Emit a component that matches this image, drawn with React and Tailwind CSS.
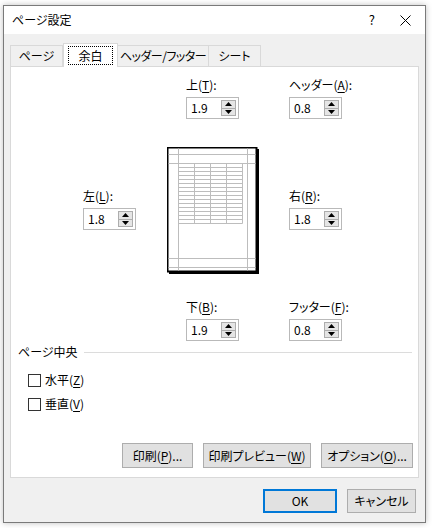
import React from 'react';

const font = "font-['Yu_Gothic_UI','Meiryo_UI','Noto_Sans_CJK_JP',sans-serif] [font-feature-settings:'palt']";

function Acc({ children }) {
  return <span className="underline underline-offset-2">{children}</span>;
}

function Spin() {
  return (
    <div className="absolute right-[2px] top-[2px] bottom-[2px] w-[15px] flex flex-col border border-[#adadad] bg-[#e5e5e5]">
      <div className="flex-1 flex items-center justify-center border-b border-[#adadad]">
        <svg width="7" height="4" viewBox="0 0 7 4"><path d="M0 4 L3.5 0 L7 4 Z" fill="#000" /></svg>
      </div>
      <div className="flex-1 flex items-center justify-center">
        <svg width="7" height="4" viewBox="0 0 7 4"><path d="M0 0 L3.5 4 L7 0 Z" fill="#000" /></svg>
      </div>
    </div>
  );
}

function Field({ label, acc, value }) {
  return (
    <div className="flex flex-col w-[53px]">
      <div className="h-[16px] leading-[16px] text-[12px] whitespace-nowrap">
        {label}(<Acc>{acc}</Acc>):
      </div>
      <div className="relative mt-[4px] h-[22px] w-[53px] border border-[#b9b9b9] bg-white">
        <span className="absolute left-[4px] top-[2px] text-[12px] leading-[16px]">{value}</span>
        <Spin />
      </div>
    </div>
  );
}

function PagePreview() {
  const rows = [];
  for (let i = 0; i <= 15; i++) rows.push(16 + i * 4);
  const cols = [11, 27, 43, 59, 75];
  return (
    <svg width="92" height="127" viewBox="0 0 92 127" className="block">
      <rect x="2" y="2" width="90" height="125" fill="#000" />
      <rect x="0.5" y="0.5" width="89" height="124" fill="#fff" stroke="#000" strokeWidth="2" />
      <g stroke="#bdbdbd" strokeWidth="1">
        <line x1="11.5" y1="1.5" x2="11.5" y2="123.5" />
        <line x1="80.5" y1="1.5" x2="80.5" y2="123.5" />
        <line x1="1.5" y1="7.5" x2="88.5" y2="7.5" />
        <line x1="1.5" y1="16.5" x2="88.5" y2="16.5" />
        <line x1="1.5" y1="111.5" x2="88.5" y2="111.5" />
        <line x1="1.5" y1="120.5" x2="88.5" y2="120.5" />
        {rows.map(y => <line key={'r' + y} x1="11.5" y1={y + 0.5} x2="75.5" y2={y + 0.5} />)}
        {cols.map(x => <line key={'c' + x} x1={x + 0.5} y1="16.5" x2={x + 0.5} y2="76.5" />)}
      </g>
    </svg>
  );
}

function Check({ label, acc }) {
  return (
    <div className="flex items-center h-[24px] pl-[17px]">
      <div className="w-[13px] h-[13px] border border-[#333] bg-white" />
      <span className="ml-[4px] text-[12px] leading-[16px]">{label}(<Acc>{acc}</Acc>)</span>
    </div>
  );
}

function Btn({ children, className = '' }) {
  return (
    <div className={`h-[25px] flex items-center justify-center whitespace-nowrap border border-[#adadad] bg-[#e1e1e1] text-[12px] ${className}`}>
      {children}
    </div>
  );
}

export default function App() {
  return (
    <div className={`w-[432px] h-[528px] overflow-hidden bg-white pt-[5px] pl-[3px] text-black ${font}`}>
      <div className="w-[423px] h-[518px] border border-[#7a7a7a] flex flex-col bg-[#f0f0f0] shadow-[0_0_6px_rgba(0,0,0,0.25)]">
        {/* title bar */}
        <div className="h-[28px] bg-white flex items-center pl-[8px] shrink-0">
          <span className="text-[12px]">ページ設定</span>
          <span className="ml-auto mr-[25px] text-[13px]">?</span>
          <svg width="11" height="11" viewBox="0 0 11 11" className="mr-[14px]">
            <path d="M0.5 0.5 L10.5 10.5 M10.5 0.5 L0.5 10.5" stroke="#000" strokeWidth="1" />
          </svg>
        </div>

        <div className="flex-1 flex flex-col pl-[6px] pr-[6px]">
          {/* tabs */}
          <div className="mt-[9px] h-[23px] flex items-end text-[12px] whitespace-nowrap relative z-10">
            <div className="h-[21px] w-[53px] flex items-center justify-center border border-b-0 border-[#d9d9d9] bg-[#f0f0f0]">ページ</div>
            <div className="h-[24px] -mb-px w-[55px] flex items-center justify-center border border-b-0 border-[#d9d9d9] bg-white">
              <span className="outline outline-1 outline-dotted outline-black px-[9px] leading-[17px]">余白</span>
            </div>
            <div className="h-[21px] w-[91px] flex items-center justify-center border border-b-0 border-l-0 border-[#d9d9d9] bg-[#f0f0f0] tracking-[-0.5px]">ヘッダー/フッター</div>
            <div className="h-[21px] w-[52px] flex items-center justify-center border border-b-0 border-l-0 border-[#d9d9d9] bg-[#f0f0f0]">シート</div>
          </div>

          {/* panel */}
          <div className="w-[409px] h-[412px] border border-[#d9d9d9] bg-white flex flex-col">
            <div className="flex pl-[175px] mt-[10px] gap-[50px]">
              <Field label="上" acc="T" value="1.9" />
              <Field label="ヘッダー" acc="A" value="0.8" />
            </div>

            <div className="flex items-start mt-[28px] pl-[72px]">
              <div className="mt-[41px]"><Field label="左" acc="L" value="1.8" /></div>
              <div className="ml-[31px]"><PagePreview /></div>
              <div className="ml-[30px] mt-[41px]"><Field label="右" acc="R" value="1.8" /></div>
            </div>

            <div className="flex pl-[175px] mt-[25px] gap-[50px]">
              <Field label="下" acc="B" value="1.9" />
              <Field label="フッター" acc="F" value="0.8" />
            </div>

            <div className="flex items-center mt-[3px] pl-[7px] pr-[6px] h-[16px]">
              <span className="text-[12px] leading-[16px]">ページ中央</span>
              <div className="flex-1 ml-[6px] border-t border-[#dcdcdc]" />
            </div>
            <div className="mt-[8px] flex flex-col">
              <Check label="水平" acc="Z" />
              <Check label="垂直" acc="V" />
            </div>

            <div className="mt-auto mb-[9px] flex justify-end pr-[5px] gap-[10px]">
              <Btn className="w-[71px]">印刷(<Acc>P</Acc>)...</Btn>
              <Btn className="w-[108px]">印刷プレビュー(<Acc>W</Acc>)</Btn>
              <Btn className="w-[92px]">オプション(<Acc>O</Acc>)...</Btn>
            </div>
          </div>

          {/* footer */}
          <div className="mt-[11px] flex justify-end gap-[10px] pr-[3px]">
            <div className="h-[24px] w-[74px] flex items-center justify-center border-2 border-[#0078d7] bg-[#e1e1e1] text-[12px]">OK</div>
            <div className="h-[24px] w-[69px] flex items-center justify-center border border-[#adadad] bg-[#e1e1e1] text-[12px]">キャンセル</div>
          </div>
        </div>
      </div>
    </div>
  );
}
